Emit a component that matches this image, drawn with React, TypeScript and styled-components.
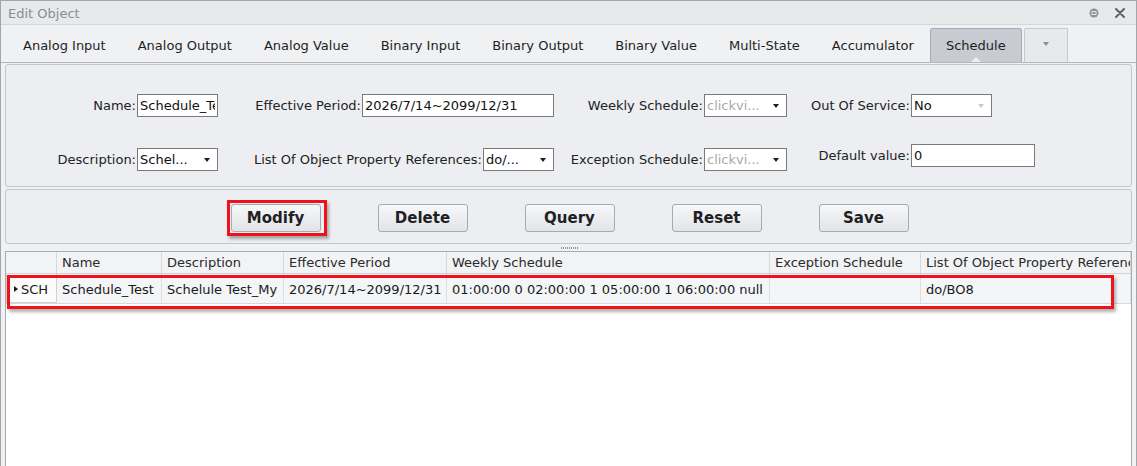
import React from 'react';
import styled, { createGlobalStyle } from 'styled-components';

const GlobalStyle = createGlobalStyle`
  html, body {
    margin: 0;
    padding: 0;
    background: #ffffff;
  }
  body {
    font-family: 'DejaVu Sans', 'Noto Sans', sans-serif;
    font-size: 13px;
    color: #1c1c1c;
  }
  * {
    box-sizing: border-box;
  }
`;

const tabs = [
    'Analog Input',
    'Analog Output',
    'Analog Value',
    'Binary Input',
    'Binary Output',
    'Binary Value',
    'Multi-State',
    'Accumulator',
    'Schedule',
];

const actions = ['Modify', 'Delete', 'Query', 'Reset', 'Save'];

const columns = [
    'Name',
    'Description',
    'Effective Period',
    'Weekly Schedule',
    'Exception Schedule',
    'List Of Object Property References',
];

const rows = [
    {
        id: 'SCH',
        cells: [
            'Schedule_Test',
            'Schelule Test_My',
            '2026/7/14~2099/12/31',
            '01:00:00 0 02:00:00 1 05:00:00 1 06:00:00 null',
            '',
            'do/BO8',
        ],
    },
];

const PinIcon = () => (
    <svg width="10" height="10" viewBox="0 0 10 10">
        <circle cx="5" cy="5" r="4.5" fill="#8f9195" />
        <rect x="3" y="3.5" width="4" height="3" fill="none" stroke="#e4e5e8" strokeWidth="1" />
    </svg>
);

const CloseIcon = () => (
    <svg width="10" height="10" viewBox="0 0 10 10">
        <path d="M1 1 L9 9 M9 1 L1 9" stroke="#5e6065" strokeWidth="2" strokeLinecap="round" />
    </svg>
);

const App = () => {
    return (
        <>
            <GlobalStyle />
            <Window>
                <TitleBar>
                    <Title>Edit Object</Title>
                    <TitleTools>
                        <PinIcon />
                        <CloseIcon />
                    </TitleTools>
                </TitleBar>

                <TabStrip>
                    {tabs.map((t) => (
                        <Tab key={t} $active={t === 'Schedule'}>
                            {t}
                        </Tab>
                    ))}
                    <MoreTab>
                        <Caret $color="#8a8c90" />
                    </MoreTab>
                </TabStrip>

                <FormPanel>
                    <Cell>
                        <Label>Name:</Label>
                        <TextBox $w={81} value="Schedule_Test" readOnly />
                    </Cell>
                    <Cell>
                        <Label>Effective Period:</Label>
                        <TextBox $w={192} value="2026/7/14~2099/12/31" readOnly />
                    </Cell>
                    <Cell>
                        <Label>Weekly Schedule:</Label>
                        <Combo $w={83} $disabled>
                            <ComboText>clickvi...</ComboText>
                            <Caret />
                        </Combo>
                    </Cell>
                    <Cell $start>
                        <Label $w={123}>Out Of Service:</Label>
                        <Combo $w={81}>
                            <ComboText>No</ComboText>
                            <Caret $color="#c9cacd" />
                        </Combo>
                    </Cell>

                    <Cell>
                        <Label>Description:</Label>
                        <Combo $w={81}>
                            <ComboText>Schel...</ComboText>
                            <Caret />
                        </Combo>
                    </Cell>
                    <Cell>
                        <Label>List Of Object Property References:</Label>
                        <Combo $w={71}>
                            <ComboText>do/...</ComboText>
                            <Caret />
                        </Combo>
                    </Cell>
                    <Cell>
                        <Label>Exception Schedule:</Label>
                        <Combo $w={83} $disabled>
                            <ComboText>clickvi...</ComboText>
                            <Caret />
                        </Combo>
                    </Cell>
                    <Cell $start $top>
                        <Label $w={123}>Default value:</Label>
                        <TextBox $w={124} value="0" readOnly />
                    </Cell>
                </FormPanel>

                <ActionPanel>
                    {actions.map((a) => (
                        <ActionButton key={a} $marked={a === 'Modify'}>
                            {a}
                        </ActionButton>
                    ))}
                </ActionPanel>

                <Splitter>
                    <Grip />
                </Splitter>

                <Grid>
                    <HeaderRow>
                        <HeaderCell />
                        {columns.map((c) => (
                            <HeaderCell key={c}>{c}</HeaderCell>
                        ))}
                    </HeaderRow>
                    {rows.map((r) => (
                        <DataRow key={r.id}>
                            <RowHead>
                                <RowArrow />
                                {r.id}
                            </RowHead>
                            {r.cells.map((v, i) => (
                                <DataCell key={i}>{v}</DataCell>
                            ))}
                        </DataRow>
                    ))}
                    <RowMark />
                </Grid>
            </Window>
        </>
    );
};

export default App;

const Window = styled.div`
    width: 1137px;
    height: 466px;
    display: flex;
    flex-direction: column;
    background: #f0f1f3;
    border: 1px solid #a2a5ab;
    border-bottom: none;
    overflow: hidden;
`;

const TitleBar = styled.div`
    flex: none;
    height: 24px;
    display: flex;
    align-items: center;
    justify-content: space-between;
    padding: 1px 11px 0 7px;
    background: #e8e9eb;
    border-bottom: 1px solid #d4d6da;
`;

const Title = styled.span`
    color: #8b8c8f;
    font-size: 13px;
`;

const TitleTools = styled.div`
    display: flex;
    align-items: center;
    gap: 16px;
`;

const TabStrip = styled.div`
    flex: none;
    height: 38px;
    display: flex;
    align-items: flex-end;
    padding: 3px 0 0 6px;
    border-bottom: 1px solid #b3b6bc;
`;

const Tab = styled.div<{ $active?: boolean }>`
    position: relative;
    height: 34px;
    display: flex;
    align-items: center;
    padding: 0 15px;
    white-space: nowrap;
    color: #1e1e1e;
    border: 1px solid ${(p) => (p.$active ? '#a7abb3' : 'transparent')};
    border-bottom: none;
    border-radius: 3px 3px 0 0;
    background: ${(p) => (p.$active ? '#c8cbd2' : 'transparent')};

    &::after {
        content: '';
        display: ${(p) => (p.$active ? 'block' : 'none')};
        position: absolute;
        left: 50%;
        bottom: 0;
        margin-left: -5px;
        border-left: 5px solid transparent;
        border-right: 5px solid transparent;
        border-bottom: 5px solid #eceef1;
    }
`;

const MoreTab = styled.div`
    width: 44px;
    height: 34px;
    margin-left: 2px;
    display: flex;
    align-items: center;
    justify-content: center;
    padding-bottom: 4px;
    background: #e8e9ec;
    border: 1px solid #c6c8cd;
    border-bottom: none;
    border-radius: 2px 2px 0 0;
`;

const Caret = styled.span<{ $color?: string }>`
    flex: none;
    width: 0;
    height: 0;
    border-left: 3.5px solid transparent;
    border-right: 3.5px solid transparent;
    border-top: 4px solid ${(p) => p.$color ?? '#1e1e1e'};
`;

const FormPanel = styled.div`
    flex: none;
    margin: 1px 4px 0;
    height: 123px;
    display: grid;
    grid-template-columns: 212px 336px 233px 1fr;
    grid-template-rows: 23px 27px;
    row-gap: 27px;
    padding: 29px 0 15px;
    background: #eceef1;
    border: 1px solid #c3c6cc;
    border-radius: 3px;
`;

const Cell = styled.div<{ $start?: boolean; $top?: boolean }>`
    display: flex;
    align-items: center;
    justify-content: ${(p) => (p.$start ? 'flex-start' : 'flex-end')};
    gap: 1px;
    align-self: ${(p) => (p.$top ? 'start' : 'end')};
`;

const Label = styled.span<{ $w?: number }>`
    white-space: nowrap;
    color: #222;
    ${(p) => (p.$w ? `width: ${p.$w}px; text-align: right;` : '')}
`;

const TextBox = styled.input<{ $w: number }>`
    width: ${(p) => p.$w}px;
    height: 23px;
    margin: 0;
    padding: 0 2px;
    font-family: 'DejaVu Sans', sans-serif;
    font-size: 13px;
    color: #111;
    background: #fff;
    border: 1px solid #7a7a7a;
    border-radius: 0;
    outline: none;
`;

const Combo = styled.div<{ $w: number; $disabled?: boolean }>`
    width: ${(p) => p.$w}px;
    height: 23px;
    display: flex;
    align-items: center;
    padding: 0 7px 0 2px;
    background: #fff;
    border: 1px solid #7a7a7a;
    color: ${(p) => (p.$disabled ? '#a9a9a9' : '#111')};
`;

const ComboText = styled.span`
    flex: 1;
    overflow: hidden;
    white-space: nowrap;
`;

const ActionPanel = styled.div`
    flex: none;
    margin: 2px 4px 0;
    height: 55px;
    display: flex;
    justify-content: center;
    align-items: flex-start;
    gap: 57px;
    padding: 14px 0 0 2px;
    background: #eceef1;
    border: 1px solid #c3c6cc;
    border-radius: 3px;
`;

const ActionButton = styled.div<{ $marked?: boolean }>`
    position: relative;
    width: 90px;
    height: 28px;
    display: flex;
    align-items: center;
    justify-content: center;
    font-weight: 700;
    font-size: 15px;
    color: #1f1f24;
    background: linear-gradient(#f6f7f9, #e2e4e8);
    border: 1px solid #a6aab1;
    border-radius: 3px;

    &::after {
        content: '';
        display: ${(p) => (p.$marked ? 'block' : 'none')};
        position: absolute;
        top: -5px;
        left: -5px;
        right: -7px;
        bottom: -5px;
        border: 3px solid #f0121a;
        box-shadow: 2px 3px 3px rgba(0, 0, 0, 0.3);
    }
`;

const Splitter = styled.div`
    flex: none;
    height: 7px;
    display: flex;
    align-items: center;
    justify-content: center;
`;

const Grip = styled.div`
    width: 18px;
    height: 2px;
    margin-left: 2px;
    background: repeating-linear-gradient(90deg, #8d9096 0 1px, transparent 1px 2px);
`;

const Grid = styled.div`
    position: relative;
    flex: 1;
    margin: 0 4px;
    background: #fff;
    border: 1px solid #a8abb1;
    border-bottom: none;
    overflow: hidden;
`;

const columnTemplate = '51px 105px 122px 163px 323px 151px 1fr';

const HeaderRow = styled.div`
    display: grid;
    grid-template-columns: ${columnTemplate};
    height: 22px;
    background: #f2f3f5;
    border-bottom: 1px solid #d2d4d8;
`;

const HeaderCell = styled.div`
    display: flex;
    align-items: center;
    padding-left: 5px;
    white-space: nowrap;
    overflow: hidden;
    color: #2a2a2a;
    border-right: 1px solid #d6d8dc;
`;

const DataRow = styled.div`
    display: grid;
    grid-template-columns: ${columnTemplate};
    height: 30px;
    background: #f4f5f7;
    border-bottom: 1px solid #d6d8dc;
`;

const DataCell = styled.div`
    display: flex;
    align-items: center;
    padding: 2px 0 0 5px;
    white-space: nowrap;
    overflow: hidden;
    color: #1a1a1a;
    border-right: 1px solid #dcdee2;
`;

const RowHead = styled(DataCell)`
    padding-left: 7px;
    gap: 3px;
    background: #fbfbfc;
    border: 1px solid #cfd1d6;
    border-top: none;
`;

const RowArrow = styled.span`
    width: 0;
    height: 0;
    border-top: 3.5px solid transparent;
    border-bottom: 3.5px solid transparent;
    border-left: 4px solid #1a1a1a;
`;

const RowMark = styled.div`
    position: absolute;
    left: 1px;
    top: 23px;
    width: 1107px;
    height: 34px;
    border: 3px solid #f0121a;
    box-shadow: 2px 3px 3px rgba(0, 0, 0, 0.3);
    pointer-events: none;
`;
